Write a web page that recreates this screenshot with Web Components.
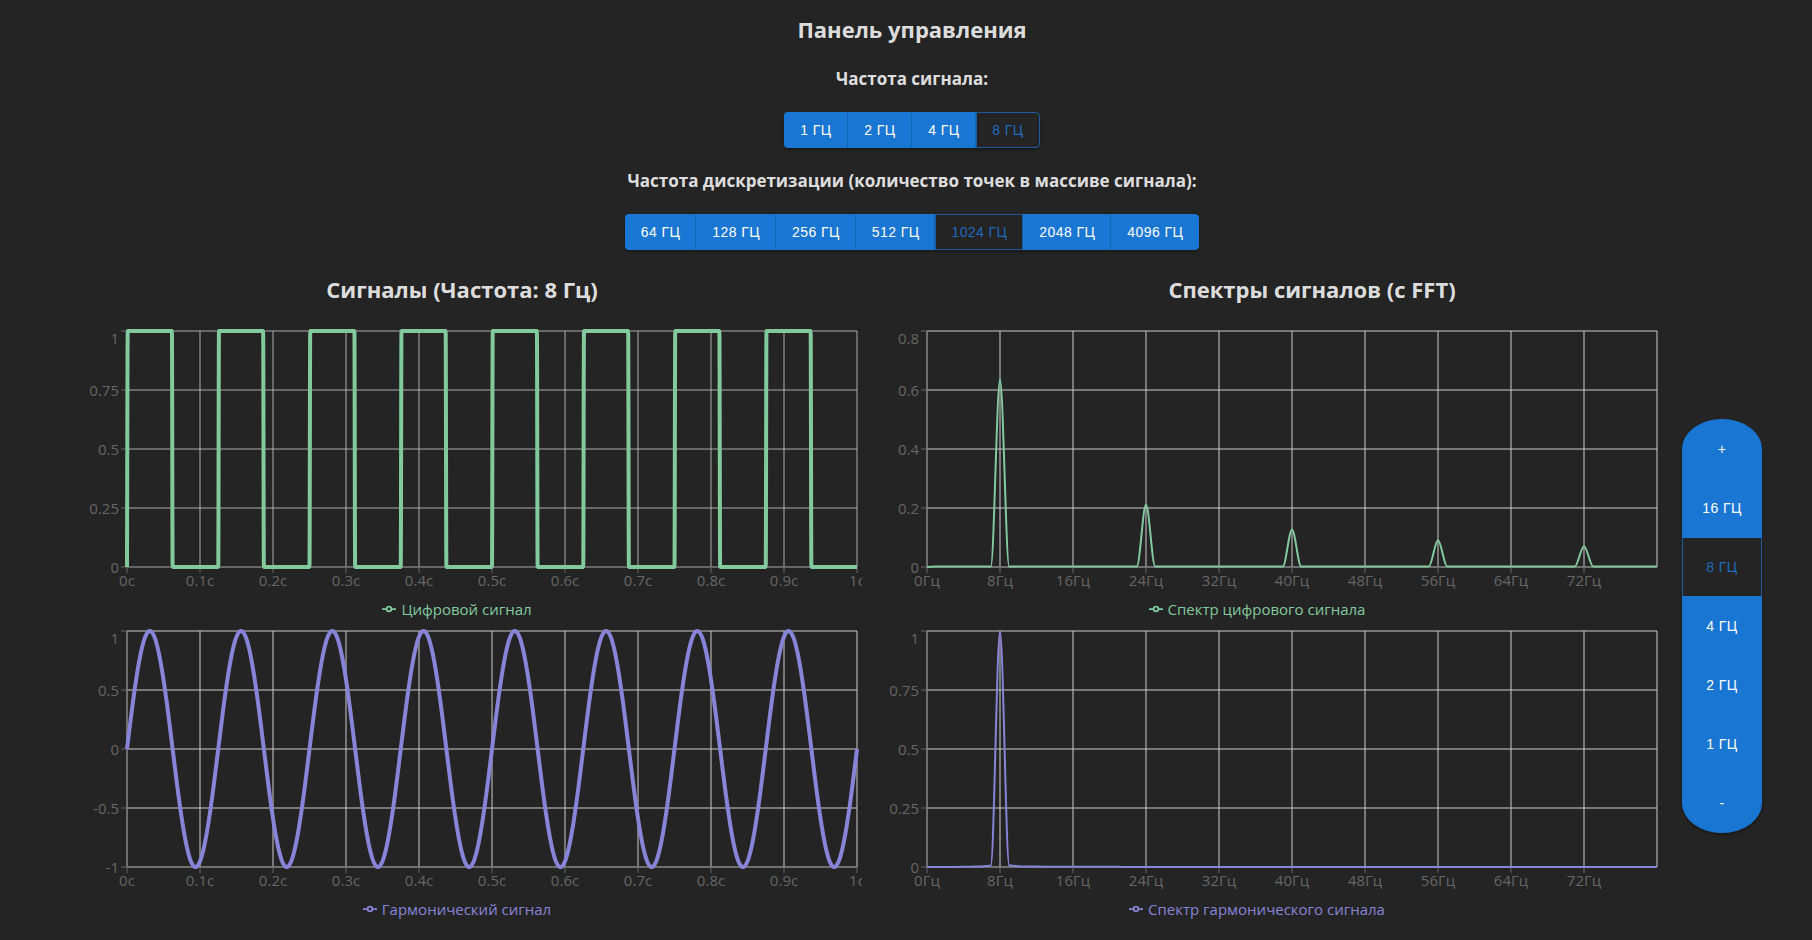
<!DOCTYPE html>
<html lang="ru">
<head>
<meta charset="utf-8">
<meta name="viewport" content="width=device-width, initial-scale=1">
<title>Панель управления</title>
<style>
  body { margin: 0; background: #242424; color: rgba(255,255,255,.87); font: 15px/24px "Open Sans", "Noto Sans", sans-serif; }
</style>
</head>
<body>
<signal-app></signal-app>

<script>
const NS = 'http://www.w3.org/2000/svg';

class OptionGroup extends HTMLElement {
  connectedCallback() {
    const root = this.attachShadow({ mode: 'open' });
    const active = this.getAttribute('active');
    root.innerHTML = `
      <style>
        :host { display: inline-flex; border-radius: 4px; box-shadow: 0 2px 3px rgba(0,0,0,.3); }
        button {
          box-sizing: border-box; min-width: 64px; height: 36px; margin: 0; padding: 0 15px;
          border: 1px solid #1976d2; border-right-color: #1565c0; background: #1976d2; color: #fff;
          font: 500 14px/24px "Liberation Sans", Arial, sans-serif; letter-spacing: .03em;
          white-space: nowrap; cursor: pointer;
        }
        button:first-of-type { border-radius: 4px 0 0 4px; }
        button:last-of-type { border-radius: 0 4px 4px 0; border-right-color: #1976d2; }
        button[aria-pressed="true"] { background: #242424; color: #1f6bbf; border-color: #1f5b9c; }
        :host([vertical]) { flex-direction: column; width: 80px; border-radius: 40px / 30px; }
        :host([vertical]) button { height: 60px; border-color: #1976d2; border-bottom-color: #1871ca; border-radius: 0; padding: 0; }
        :host([vertical]) button + button { margin-top: -1px; }
        :host([vertical]) button[aria-pressed="true"] { border-color: #1976d2 #1f5b9c; }
        :host([vertical]) button:first-of-type { border-radius: 40px 40px 0 0 / 30px 30px 0 0; }
        :host([vertical]) button:last-of-type { border-radius: 0 0 40px 40px / 0 0 30px 30px; border-bottom-color: #1976d2; }
      </style>`;
    for (const text of this.getAttribute('options').split('|')) {
      const b = document.createElement('button');
      b.type = 'button';
      b.textContent = text;
      b.setAttribute('aria-pressed', String(text === active));
      root.append(b);
    }
  }
}
customElements.define('option-group', OptionGroup);

/* Data series: each returns [x, y] points in data units. */
const SERIES = {
  square: () => Array.from({ length: 1025 }, (_, i) => {
    const p = i % 128;
    return [i / 1024, p > 0 && p < 64 ? 1 : 0];
  }),
  sine: () => Array.from({ length: 1025 }, (_, i) => [i / 1024, Math.sin(2 * Math.PI * 8 * i / 1024)]),
  squareSpectrum: () => Array.from({ length: 81 }, (_, f) =>
    [f, f === 0 ? 0 : f % 16 === 8 ? 4 / Math.PI * 4 / f : 0.002]),
  sineSpectrum: () => Array.from({ length: 81 }, (_, f) =>
    [f, f === 8 ? 1 : f < 8 ? 0.006 * f / 7 / (8 - f) : 0.007 / (f - 8)])
};

/* Monotone cubic interpolation through the points. */
function monotonePath(p) {
  const n = p.length, s = [], m = [];
  for (let i = 0; i < n - 1; i++) s.push((p[i + 1][1] - p[i][1]) / (p[i + 1][0] - p[i][0]));
  for (let i = 0; i < n; i++) {
    const a = s[i - 1] ?? s[i], b = s[i] ?? s[i - 1];
    m.push(a * b <= 0 ? 0 : Math.sign(a) * Math.min(Math.abs(a), Math.abs(b), Math.abs(a + b) / 4) * 2);
  }
  let d = `M${p[0][0]},${p[0][1]}`;
  for (let i = 1; i < n; i++) {
    const h = (p[i][0] - p[i - 1][0]) / 3;
    d += `C${p[i - 1][0] + h},${p[i - 1][1] + h * m[i - 1]},${p[i][0] - h},${p[i][1] - h * m[i]},${p[i][0]},${p[i][1]}`;
  }
  return d;
}

class LineChart extends HTMLElement {
  connectedCallback() {
    const root = this.attachShadow({ mode: 'open' });
    root.innerHTML = `
      <style>
        :host { display: block; min-width: 0; height: 300px; overflow: hidden; }
        svg { display: block; width: 100%; height: 271px; }
        .grid { stroke: #ccc; opacity: var(--grid-opacity, 1); }
        .axis { stroke: #666; }
        text { fill: #666; font-size: 15px; }
        .y { text-anchor: end; }
        .x { text-anchor: middle; }
        .legend { display: flex; justify-content: center; align-items: center; gap: 5px; height: 24px; padding-right: 10px; line-height: 24px; white-space: nowrap; }
        .legend svg { width: 14px; height: 14px; flex: none; }
        .curve, .legend path, .legend circle { fill: none; stroke: var(--series); }
      </style>
      <svg class="plot" role="img"></svg>
      <div class="legend">
        <svg viewBox="0 0 32 32" aria-hidden="true"><path stroke-width="4" d="M0 16h10.667M21.333 16H32"/><circle cx="16" cy="16" r="5.333" stroke-width="4"/></svg>
        <span></span>
      </div>`;
    this.style.setProperty('--series', this.getAttribute('color'));
    const label = root.querySelector('span');
    label.textContent = this.getAttribute('label');
    label.style.color = this.getAttribute('color');
    this.svg = root.querySelector('.plot');
    this.svg.setAttribute('aria-label', this.getAttribute('label'));
    this.points = SERIES[this.getAttribute('series')]();
    this.draw();
    new ResizeObserver(() => this.draw()).observe(this);
  }

  add(name, attrs, text) {
    const el = document.createElementNS(NS, name);
    for (const k in attrs) el.setAttribute(k, attrs[k]);
    if (text !== undefined) el.textContent = text;
    this.svg.append(el);
  }

  draw() {
    const width = this.clientWidth;
    if (width === this.drawn) return;
    this.drawn = width;
    this.svg.replaceChildren();
    const x0 = 65, x1 = width - 5, y0 = 5, y1 = 241;
    const yTicks = this.getAttribute('y-ticks').split(' ').map(Number);
    const lo = yTicks[0], hi = yTicks[yTicks.length - 1];
    const xMax = Number(this.getAttribute('x-max')), step = Number(this.getAttribute('x-step'));
    const unit = this.getAttribute('unit');
    const X = v => x0 + v / xMax * (x1 - x0);
    const Y = v => y1 - (v - lo) / (hi - lo) * (y1 - y0);
    const labelled = Number(this.getAttribute('x-labels'));
    const count = Math.round(xMax / step);

    for (const v of yTicks) this.add('line', { class: 'grid', x1: x0, x2: x1, y1: Y(v), y2: Y(v) });
    for (let i = 0; i <= count; i++) this.add('line', { class: 'grid', x1: X(i * step), x2: X(i * step), y1: y0, y2: y1 });
    this.add('path', { class: 'axis', fill: 'none', d: `M${x0},${y0}V${y1}H${x1}` });

    for (const v of yTicks) {
      this.add('line', { class: 'axis', x1: x0 - 6, x2: x0, y1: Y(v), y2: Y(v) });
      this.add('text', { class: 'y', x: x0 - 8, y: Math.max(Y(v), 12) + 6 }, String(v));
    }
    for (let i = 0; i < labelled; i++) {
      const v = Number((i * step).toFixed(2));
      this.add('line', { class: 'axis', x1: X(v), x2: X(v), y1: y1, y2: y1 + 6 });
      this.add('text', { class: 'x', x: X(v), y: y1 + 19 }, v + unit);
    }
    this.add('path', {
      class: 'curve', 'stroke-width': this.getAttribute('weight'),
      d: monotonePath(this.points.map(([x, y]) => [X(x), Y(y)]))
    });
  }
}
customElements.define('line-chart', LineChart);

class SignalApp extends HTMLElement {
  connectedCallback() {
    this.attachShadow({ mode: 'open' }).innerHTML = `
      <style>
        :host { display: block; padding: 12px 50px 14px 62px; }
        h2, h3 { margin: 0; text-align: center; font-weight: 700; }
        h2 { font-size: 22px; line-height: 34px; }
        h3 { font-size: 17px; line-height: 26px; }
        header { display: flex; flex-direction: column; align-items: center; gap: 20px; margin-bottom: 22px; }
        main { display: grid; grid-template-columns: minmax(0, 1fr) minmax(0, 1fr) 100px; grid-template-rows: 54px 300px 300px; }
        .wide { grid-column: 2 / 4; }
        .dim { --grid-opacity: .8; }
        option-group[vertical] { grid-column: 3; grid-row: 2 / 4; justify-self: end; align-self: center; }
      </style>
      <header>
        <h2>Панель управления</h2>
        <h3>Частота сигнала:</h3>
        <option-group options="1 ГЦ|2 ГЦ|4 ГЦ|8 ГЦ" active="8 ГЦ"></option-group>
        <h3>Частота дискретизации (количество точек в массиве сигнала):</h3>
        <option-group options="64 ГЦ|128 ГЦ|256 ГЦ|512 ГЦ|1024 ГЦ|2048 ГЦ|4096 ГЦ" active="1024 ГЦ"></option-group>
      </header>
      <main>
        <h2>Сигналы (Частота: 8 Гц)</h2>
        <h2 class="wide">Спектры сигналов (с FFT)</h2>
        <line-chart class="dim" series="square" color="#82ca9d" weight="4" label="Цифровой сигнал"
          y-ticks="0 0.25 0.5 0.75 1" x-max="1" x-step="0.1" x-labels="11" unit="с"></line-chart>
        <line-chart series="squareSpectrum" color="#82ca9d" weight="2" label="Спектр цифрового сигнала"
          y-ticks="0 0.2 0.4 0.6 0.8" x-max="80" x-step="8" x-labels="10" unit="Гц"></line-chart>
        <option-group vertical options="+|16 ГЦ|8 ГЦ|4 ГЦ|2 ГЦ|1 ГЦ|-" active="8 ГЦ"></option-group>
        <line-chart series="sine" color="#8884d8" weight="4" label="Гармонический сигнал"
          y-ticks="-1 -0.5 0 0.5 1" x-max="1" x-step="0.1" x-labels="11" unit="с"></line-chart>
        <line-chart series="sineSpectrum" color="#8884d8" weight="2" label="Спектр гармонического сигнала"
          y-ticks="0 0.25 0.5 0.75 1" x-max="80" x-step="8" x-labels="10" unit="Гц"></line-chart>
      </main>`;
  }
}
customElements.define('signal-app', SignalApp);
</script>
</body>
</html>
